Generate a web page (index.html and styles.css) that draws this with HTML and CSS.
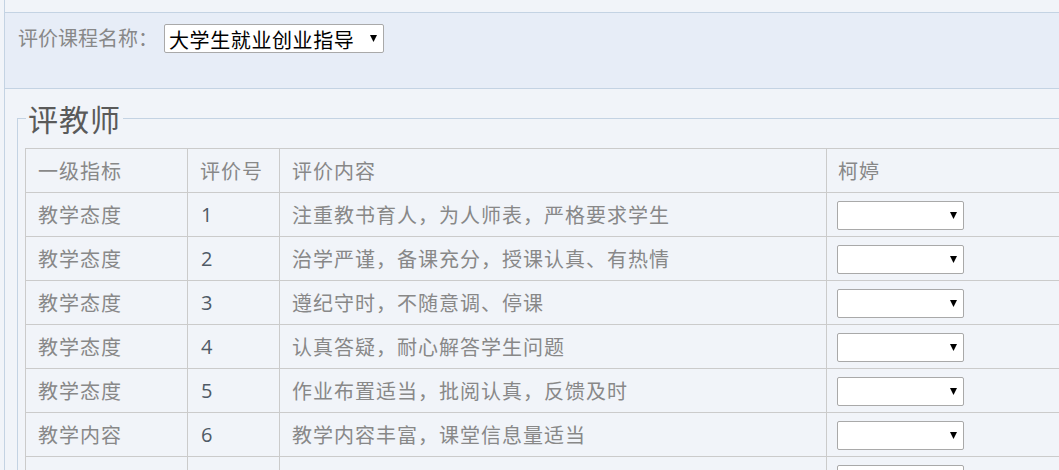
FILE: index.html
```html
<!DOCTYPE html>
<html lang="zh-CN">
<head>
  <meta charset="UTF-8">
  <meta name="viewport" content="width=device-width, initial-scale=1.0">
  <title>评教</title>
  <link rel="stylesheet" href="styles.css">
</head>
<body>
  <div class="page">
    <div class="course-bar">
      <label for="course">评价课程名称：</label>
      <select id="course" class="course-select">
        <option>大学生就业创业指导</option>
      </select>
    </div>
    <fieldset class="teacher-box">
      <legend>评教师</legend>
      <table class="eval-table">
        <colgroup>
          <col class="c-level">
          <col class="c-no">
          <col class="c-text">
          <col class="c-teacher">
        </colgroup>
        <thead>
          <tr>
            <th>一级指标</th>
            <th>评价号</th>
            <th>评价内容</th>
            <th class="pick">柯婷</th>
          </tr>
        </thead>
        <tbody id="eval-body">
          <tr><td>教学态度</td><td class="num">1</td><td>注重教书育人，为人师表，严格要求学生</td><td class="pick"><select class="score"><option></option></select></td></tr>
          <tr><td>教学态度</td><td class="num">2</td><td>治学严谨，备课充分，授课认真、有热情</td><td class="pick"><select class="score"><option></option></select></td></tr>
          <tr><td>教学态度</td><td class="num">3</td><td>遵纪守时，不随意调、停课</td><td class="pick"><select class="score"><option></option></select></td></tr>
          <tr><td>教学态度</td><td class="num">4</td><td>认真答疑，耐心解答学生问题</td><td class="pick"><select class="score"><option></option></select></td></tr>
          <tr><td>教学态度</td><td class="num">5</td><td>作业布置适当，批阅认真，反馈及时</td><td class="pick"><select class="score"><option></option></select></td></tr>
          <tr><td>教学内容</td><td class="num">6</td><td>教学内容丰富，课堂信息量适当</td><td class="pick"><select class="score"><option></option></select></td></tr>
          <tr><td></td><td class="num"></td><td></td><td class="pick"><select class="score"><option></option></select></td></tr>
        </tbody>
      </table>
    </fieldset>
  </div>
</body>
</html>
```

FILE: styles.css
```css
html, body {
  overflow: hidden;
}
body {
  margin: 0;
  padding: 0;
  background-color: #f1f4f9;
  font-family: "Noto Sans CJK SC", "Noto Sans", sans-serif;
  color: #888;
}
.page {
  margin-left: 4px;
  padding-top: 12px;
  min-height: 470px;
  border-left: 1px solid #c4d3e3;
}
.course-bar {
  height: 75px;
  box-sizing: content-box;
  background-color: #e7edf7;
  border-top: 1px solid #c4d3e3;
  border-bottom: 1px solid #c4d3e3;
  padding-left: 13px;
  display: flex;
  align-items: flex-start;
}
.course-bar label {
  font-size: 20px;
  line-height: 28px;
  margin-top: 11px;
  margin-right: 6px;
}
.course-select {
  margin-top: 11px;
  width: 220px;
  height: 29px;
  font-family: "Noto Sans CJK SC", sans-serif;
  font-size: 20px;
  letter-spacing: 0.6px;
  color: #000;
  padding: 0 0 0 4px;
  -webkit-appearance: none;
  appearance: none;
  background: #fff url("data:image/svg+xml;utf8,<svg xmlns='http://www.w3.org/2000/svg' width='7' height='7'><path d='M0 0h7L3.5 7z' fill='black'/></svg>") no-repeat right 6px center;
  border: 1px solid #a9a9a9;
  border-radius: 2px;
}
.teacher-box {
  margin: 11px 0 0 12px;
  padding: 12px 0 0 7px;
  border: 1px solid #c4d3e3;
  border-right: none;
  border-bottom: none;
  min-width: 0;
}
.teacher-box legend {
  font-size: 30px;
  line-height: 36px;
  color: #5a5a5a;
  padding: 0 2px;
  margin-left: 1px;
  letter-spacing: 1px;
}
.eval-table {
  width: 1180px;
  table-layout: fixed;
  border-collapse: collapse;
}
.c-level { width: 162px; }
.c-no { width: 92px; }
.c-text { width: 547px; }
.eval-table th, .eval-table td {
  height: 43px;
  padding: 0 0 0 12px;
  border: 1px solid #cbcbcb;
  text-align: left;
  font-weight: normal;
  font-size: 20px;
  letter-spacing: 1px;
  color: #888;
  white-space: nowrap;
  vertical-align: middle;
}
.eval-table td.num {
  font-family: "Open Sans", sans-serif;
  color: #4f5a66;
  padding-left: 13px;
}
.eval-table .pick {
  padding-left: 10px;
}
.eval-table th.pick {
  padding-left: 11px;
}
.score {
  display: block;
  width: 127px;
  height: 29px;
  margin-top: 1px;
  -webkit-appearance: none;
  appearance: none;
  background: #fff url("data:image/svg+xml;utf8,<svg xmlns='http://www.w3.org/2000/svg' width='7' height='7'><path d='M0 0h7L3.5 7z' fill='black'/></svg>") no-repeat right 6px center;
  border: 1px solid #a9a9a9;
  border-radius: 2px;
}
```
